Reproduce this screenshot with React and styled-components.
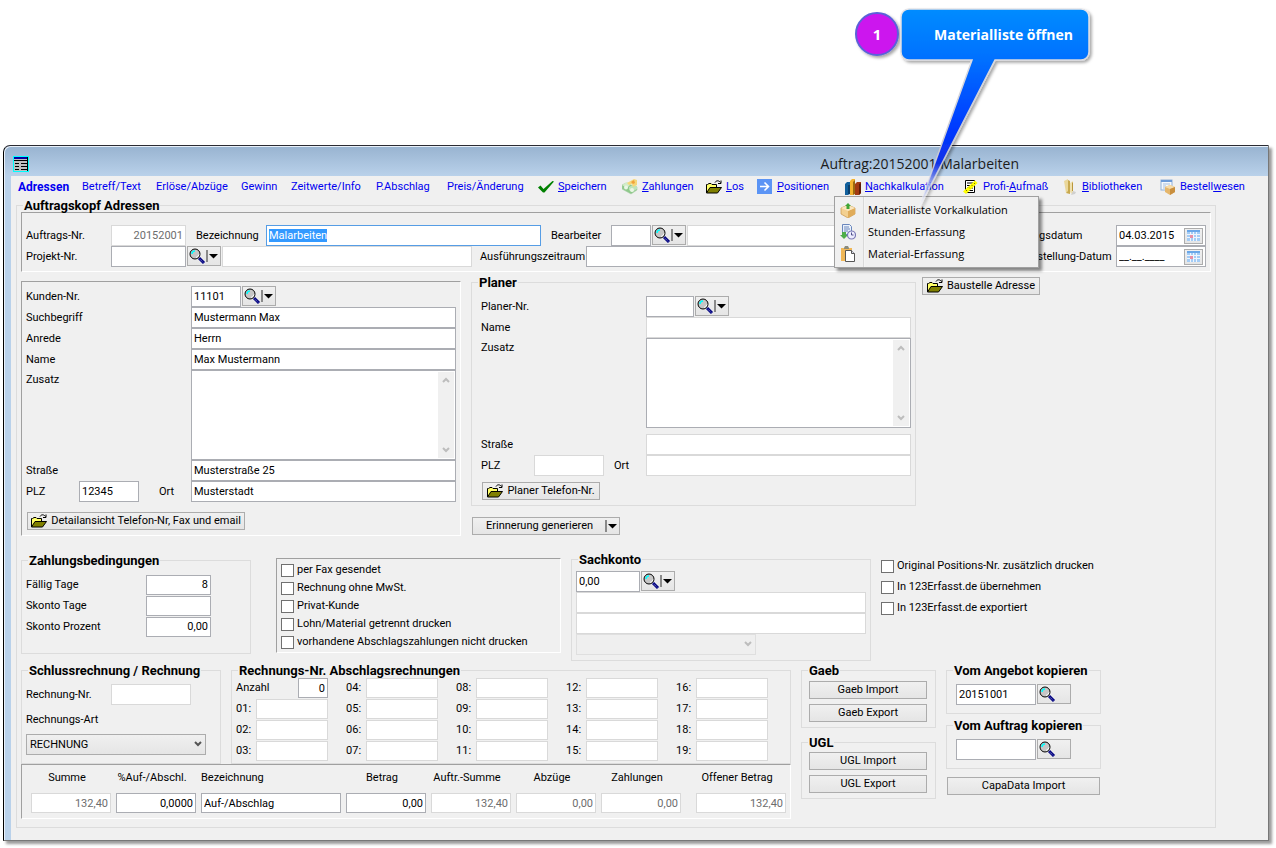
import React, { useEffect, useRef } from "react";
import styled, { createGlobalStyle } from "styled-components";

const UI_FONT = 'Roboto, "Liberation Sans", sans-serif';

const GlobalStyle = createGlobalStyle`
  *, *::before, *::after { box-sizing: border-box; }
  body { margin: 0; background: #fff; color: #000; font: 11px/16px ${UI_FONT}; }
  input, select, button, textarea { font: inherit; color: inherit; }
  svg { flex: none; }
`;

/* ---------- window frame ---------- */

const Page = styled.main`
  position: relative;
  min-width: 1240px;
  padding: 145px 7px 6px 3px;
`;

const Window = styled.section`
  border: 1px solid #000;
  border-top-color: #2b2b33;
  border-right-color: #777;
  border-bottom-color: #777;
  border-top-left-radius: 7px;
  background: #b9d1ea;
  box-shadow: inset 1px 1px 0 #e9f1fa, 3px 3px 3px rgba(0, 0, 0, 0.4);
`;

const TitleBar = styled.header`
  display: flex;
  align-items: center;
  height: 29px;
  margin: 1px 0 0 1px;
  padding: 5px 8px 0;
  border-top-left-radius: 6px;
  background: linear-gradient(#99b4d1, #b9d1ea);
`;

const Title = styled.h1`
  flex: 1;
  margin: 0;
  padding: 0 241px 0 8px;
  text-align: right;
  font: 400 14px/20px "Open Sans", "Noto Sans", sans-serif;
  color: #1c1c1c;
`;

const Client = styled.div`
  margin-left: 7px;
  padding: 0 52px 12px 5px;
  background: #f0f0f0;
`;

/* ---------- tool bar ---------- */

const ToolBar = styled.nav`
  display: grid;
  grid-template-columns: 64px 74px 85px 50px 85px 71px 91px 84px 84px 51px 88px 118px 99px 98px 84px;
  height: 23px;
  padding-left: 2px;
`;

const ToolItem = styled.div`
  position: relative;
  display: flex;
`;

const ToolButton = styled.button`
  display: flex;
  align-items: center;
  gap: 4px;
  padding: 0;
  height: 22px;
  border: 0;
  background: none;
  color: #0000f0;
  white-space: nowrap;
  font-size: ${(p) => (p.$active ? 12 : 11)}px;
  font-weight: ${(p) => (p.$active ? 700 : 400)};
`;

const Menu = styled.div`
  position: absolute;
  z-index: 2;
  top: 20px;
  left: -11px;
  width: 205px;
  padding: 2px;
  border: 1px solid #a0a0a0;
  background: linear-gradient(90deg, transparent 28px, #d9d9d9 28px, #d9d9d9 29px, #f8f8f8 29px, transparent 30px) #f0f0f0;
  box-shadow: 3px 3px 3px rgba(0, 0, 0, 0.45);
`;

const MenuItem = styled.button`
  display: flex;
  align-items: center;
  gap: 12px;
  width: 100%;
  height: 22px;
  padding: 0 3px;
  border: 0;
  background: none;
  white-space: nowrap;
  font: 11px/16px "Open Sans", "Noto Sans", sans-serif;
`;

/* ---------- containers ---------- */

const Group = styled.fieldset`
  min-width: 0;
  margin: ${(p) => p.$mt || 0}px 0 0;
  padding: 0;
  width: ${(p) => (p.$w ? p.$w + "px" : "auto")};
  flex: none;
  border: 1px solid #dcdcdc;
`;

const Legend = styled.legend`
  margin-left: 6px;
  padding: 0 1px;
  height: 13px;
  font-size: 13px;
  font-weight: 700;
  line-height: 13px;
`;

const GroupBody = styled.div`
  padding: ${(p) => p.$pad || "0 4px"};
`;

const Sunken = styled.div`
  flex: none;
  width: ${(p) => (p.$w ? p.$w + "px" : "auto")};
  margin-top: ${(p) => p.$mt || 0}px;
  padding: ${(p) => p.$pad || "4px"};
  border: 1px solid #fff;
  border-top-color: #a0a0a0;
  border-left-color: #a0a0a0;
`;

const Columns = styled.div`
  display: flex;
  align-items: flex-start;
  gap: ${(p) => p.$gap || 0}px;
  padding-top: ${(p) => p.$pt || 0}px;
`;

const Stack = styled.div`
  display: flex;
  flex-direction: column;
  align-items: flex-start;
  gap: ${(p) => p.$gap || 0}px;
  margin: ${(p) => p.$m || 0};
`;

const Row = styled.div`
  display: flex;
  align-items: ${(p) => (p.$top ? "flex-start" : "center")};
  height: ${(p) => (p.$tall ? 90 : 21)}px;
  margin-top: ${(p) => p.$mt || 0}px;
`;

/* ---------- controls ---------- */

const Label = styled.label`
  flex: none;
  width: ${(p) => (p.$w ? p.$w + "px" : "auto")};
  margin-left: ${(p) => p.$ml || 0}px;
  line-height: 20px;
  white-space: nowrap;
`;

const Input = styled.input`
  flex: ${(p) => (p.$w ? "none" : "1")};
  min-width: 0;
  width: ${(p) => (p.$w ? p.$w + "px" : "auto")};
  height: ${(p) => p.$h || 21}px;
  margin: 0;
  padding: 0 2px;
  border: 1px solid ${(p) => (p.$focus ? "#569de5" : p.disabled ? "#d9d9d9" : "#abadb3")};
  border-radius: 0;
  outline: 0;
  background: #fff;
  color: ${(p) => (p.disabled ? "#6d6d6d" : "#000")};
  text-align: ${(p) => (p.$right ? "right" : "left")};
  &::selection { background: #3399ff; color: #fff; }
`;

const SumInput = styled(Input)`
  flex: none;
  width: 100%;
  height: 20px;
`;

const Button = styled.button`
  display: flex;
  align-items: center;
  justify-content: center;
  gap: 4px;
  flex: none;
  width: ${(p) => p.$w}px;
  height: 18px;
  margin: ${(p) => p.$m || 0};
  padding: 0;
  border: 1px solid #acacac;
  background: linear-gradient(#f0f0f0, #e5e5e5);
  white-space: nowrap;
`;

const LookupButton = styled(Button)`
  height: 20px;
  align-self: flex-start;
  justify-content: flex-start;
  gap: 0;
  width: 34px;
  margin: 0 1px;
`;

const SplitButton = styled(Button)`
  justify-content: space-between;
  padding: 0 1px 0 13px;
`;

const Memo = styled.div`
  display: flex;
  width: 265px;
  height: 90px;
  padding: 1px;
  border: 1px solid #abadb3;
  background: #fff;
`;

const MemoText = styled.textarea`
  flex: 1;
  min-width: 0;
  padding: 1px;
  border: 0;
  outline: 0;
  resize: none;
  overflow: hidden;
  background: #fff;
`;

const Rail = styled.div`
  display: flex;
  flex-direction: column;
  justify-content: space-between;
  align-items: center;
  width: 16px;
  padding: 5px 0;
  background: #f0f0f0;
`;

const SelectBox = styled.span`
  position: relative;
  display: block;
  width: 180px;
  height: 21px;
  & > svg { position: absolute; right: 4px; top: 7px; pointer-events: none; }
`;

const Select = styled.select`
  appearance: none;
  width: 100%;
  height: 21px;
  padding: 0 3px;
  border: 1px solid ${(p) => (p.disabled ? "#d9d9d9" : "#acacac")};
  border-radius: 0;
  background: ${(p) => (p.disabled ? "#efefef" : "linear-gradient(#f0f0f0, #e5e5e5)")};
`;

const Check = styled.label`
  display: flex;
  align-items: center;
  gap: 3px;
  height: 18px;
  white-space: nowrap;
`;

const Tick = styled.input`
  appearance: none;
  flex: none;
  width: 13px;
  height: 13px;
  margin: 0;
  border: 1px solid #707070;
  background: #fff;
`;

const DateBox = styled.div`
  display: flex;
  align-items: center;
  width: 90px;
  height: 21px;
  padding-right: 2px;
  border: 1px solid #abadb3;
  background: #fff;
`;

const DateInput = styled(Input)`
  border: 0;
  height: 19px;
`;

const CalendarButton = styled(Button)`
  height: 16px;
`;

const NumberGrid = styled.div`
  display: grid;
  grid-template-rows: repeat(4, 21px);
  grid-auto-flow: column;
  grid-auto-columns: 92px;
  column-gap: 18px;
`;

const NumberCell = styled.div`
  display: flex;
  justify-content: space-between;
`;

const SumGrid = styled.div`
  display: grid;
  grid-template-columns: 80px 80px 140px 80px 80px 80px 80px 100px;
  column-gap: 5px;
`;

const SumCell = styled.div`
  display: flex;
  flex-direction: column;
  gap: 5px;
  padding-left: ${(p) => (p.$last ? 10 : 0)}px;
`;

const SumLabel = styled.label`
  padding-right: ${(p) => (p.$start ? 0 : 8)}px;
  text-align: ${(p) => (p.$start ? "left" : "center")};
  line-height: 20px;
  white-space: nowrap;
`;

/* ---------- annotation ---------- */

const Callout = styled.aside`
  position: absolute;
  z-index: 5;
  top: 0;
  left: 850px;
  width: 250px;
  height: 220px;
  pointer-events: none;
  color: #fff;
  font: 700 14px/18px "Open Sans", "Noto Sans", sans-serif;
  & > svg { position: absolute; inset: 0; }
`;

const CalloutText = styled.div`
  position: absolute;
  top: 10px;
  left: 51px;
  width: 188px;
  padding: 16px 16px 0 0;
  text-align: right;
  white-space: nowrap;
`;

const CalloutNumber = styled.div`
  position: absolute;
  top: 25px;
  left: 6px;
  width: 42px;
  text-align: center;
  font-size: 15px;
`;

/* ---------- icons ---------- */

const Glass = () => (
  <svg width="18" height="18" viewBox="0 0 18 18">
    <circle cx="7" cy="7" r="5" fill="#c6c6c6" stroke="#000" strokeWidth="1" />
    <path d="M4 7a3 3 0 0 1 3-3" stroke="#0ff" strokeWidth="1.5" fill="none" />
    <path d="M8 10.5a4 4 0 0 0 3-3" stroke="#fff" fill="none" />
    <path d="M11 11l5 5" stroke="#000080" strokeWidth="3" />
    <path d="M11.5 11.8l4 4" stroke="#dfe4ff" strokeWidth=".7" strokeDasharray="1 1" />
  </svg>
);

const SplitArrow = () => (
  <svg width="13" height="14" viewBox="0 0 13 14">
    <path d="M1 1v12" stroke="#8a8a8a" strokeWidth="2" />
    <path d="M3 5h9L7.500 9.500z" fill="#000" />
  </svg>
);

const Chevron = ({ up, color = "#555" }) => (
  <svg width="8" height="6" viewBox="0 0 8 6">
    <path d={up ? "M1 5l3-3 3 3" : "M1 1l3 3 3-3"} fill="none" stroke={color} strokeWidth="2" />
  </svg>
);

const Folder = () => (
  <svg width="16" height="14" viewBox="0 0 16 14">
    <path d="M.5 13V4.500h1L3 3.500h2l1 1h4.500V7" fill="#ffff66" stroke="#000" />
    <path d="M.5 13L4 7.500h11.500L11.500 13z" fill="#808000" stroke="#000" />
    <path d="M9 2.500c1.500-2.500 4-2 5.500 0M15 .500v3h-3" fill="none" stroke="#000" />
  </svg>
);

const CheckMark = () => (
  <svg width="16" height="14" viewBox="0 0 16 14">
    <path d="M0 7.500l2.500-2 3 3.500L14.500 1l1.500.500L6.500 12.500H5z" fill="#008000" />
  </svg>
);

const Money = () => (
  <svg width="16" height="16" viewBox="0 0 16 16">
    <path d="M0 6l4-2 8 3 3 1v3l-6 4-9-5z" fill="#8fc98b" stroke="#a9cfa8" strokeWidth=".6" />
    <path d="M0 6l5-3 4 2-4 4z" fill="#d2ecc8" />
    <path d="M7 8l4-2 4 1v3l-5 3-3-2z" fill="#bfe3bb" />
    <circle cx="4" cy="8.500" r="2" fill="#eaf6e6" />
    <circle cx="10" cy="11" r="2" fill="#eaf6e6" />
    <path d="M5 4l7-4 3 1v5l-4 2-1-3-3 1z" fill="#f5d77a" />
    <path d="M9 3l3-2 1 3-2 1z" fill="#f0a23c" />
  </svg>
);

const ArrowTile = () => (
  <svg width="16" height="16" viewBox="0 0 16 16">
    <rect width="15" height="15" fill="#5b94f5" />
    <path d="M3 7.500h8M7.500 3.500l4 4-4 4" fill="none" stroke="#fff" strokeWidth="1.600" />
  </svg>
);

const Books = () => (
  <svg width="16" height="17" viewBox="0 0 16 17">
    <path d="M0 5l2-2h3v12l-2 1H0z" fill="#12609c" />
    <path d="M3 6h2v9H3z" fill="#0b3f6c" />
    <path d="M5 2l2-2h3v14l-2 2H5z" fill="#f3b32f" />
    <path d="M8 3l2-2v14l-2 1z" fill="#9a6a10" />
    <path d="M10 5l2-2h4v11l-2 2h-4z" fill="#a23a13" />
    <path d="M14 5l2-1v10l-2 2z" fill="#5e1c08" />
  </svg>
);

const RulerSheet = () => (
  <svg width="16" height="16" viewBox="0 0 16 16">
    <path d="M2.500 1.500h9v12h-9z" fill="#fff" stroke="#000" />
    <path d="M4 4h6M4 6.500h6M4 9h6M6 11.500h4" stroke="#000" />
    <path d="M0 12.500L12 1.500 14.500 4 3 15z" fill="#ffff00" />
    <path d="M3 11l1 1M6 8.500l1 1M8.500 6l1 1M11 4l1 1" stroke="#777700" />
  </svg>
);

const Binders = () => (
  <svg width="16" height="16" viewBox="0 0 16 16">
    <path d="M2 2l4-2v13l-2 1z" fill="#ead79a" />
    <path d="M6 1l2 1v13l-4-1 2-2z" fill="#c8a94f" />
    <path d="M8 4l3-2v10l2 2-3 1-2-2z" fill="#efe0ad" />
    <path d="M10 4l1-1v9h-1z" fill="#b9963c" />
    <path d="M11 12l3 1-1 2-4 1z" fill="#d0d0d0" />
  </svg>
);

const OrderBox = () => (
  <svg width="16" height="16" viewBox="0 0 16 16">
    <rect x="1" y="1" width="11" height="10" fill="#f4f8fd" stroke="#8fb0d8" />
    <path d="M1 2h11" stroke="#6d9bd8" strokeWidth="2" />
    <path d="M3 5h7M3 7h3M3 9h2" stroke="#a9bfdc" />
    <path d="M5 8l5-2 5 2v5l-5 3-5-3z" fill="#e5b66b" />
    <path d="M5 8l5-2 5 2-5 2z" fill="#f7dcaa" />
    <path d="M10 10l5-2v5l-5 3z" fill="#c98f3e" />
  </svg>
);

const PackageUp = () => (
  <svg width="16" height="16" viewBox="0 0 16 16">
    <path d="M1 6l7-3 7 3v6l-7 4-7-4z" fill="#f3d090" stroke="#c9974a" strokeWidth=".7" />
    <path d="M8 9l7-3v6l-7 4z" fill="#e0ac5a" />
    <path d="M1 6l7 3 7-3-7-3z" fill="#fae6bd" />
    <path d="M8 1l3 3H9.500v3h-3V4H5z" fill="#3fa535" />
  </svg>
);

const SheetClock = () => (
  <svg width="16" height="16" viewBox="0 0 16 16">
    <path d="M2.500.500h7l2 2v8h-9z" fill="#eaf1fb" stroke="#6a87bd" />
    <path d="M4 3h5M4 5h6M4 7h4" stroke="#6a87bd" />
    <path d="M2 8h4v3h2l-4 4-4-4h2z" fill="#4fae4a" />
    <circle cx="11.500" cy="11" r="4" fill="#eeeeff" stroke="#7a78b5" strokeWidth="1.200" />
    <path d="M11.500 8.500V11h2" stroke="#50508c" fill="none" />
  </svg>
);

const Clipboard = () => (
  <svg width="16" height="16" viewBox="0 0 16 16">
    <path d="M1 2h11v13H1z" fill="#f0b757" />
    <path d="M4 2l1-2h3l1 2v1H4z" fill="#8b8b7a" />
    <path d="M5.500 4.500h6l3 3v8h-9z" fill="#fff" stroke="#555" />
    <path d="M11.500 4.500v3h3" fill="#dde" stroke="#555" />
  </svg>
);

const Calendar = () => (
  <svg width="13" height="11" viewBox="0 0 13 11">
    <rect width="13" height="11" fill="#a4ccf5" />
    <path d="M0 1h13" stroke="#6aa7e8" strokeWidth="2" />
    <path d="M0 4.500h13M0 7.500h13M3.500 2v9M6.500 2v9M9.500 2v9" stroke="#eef5fd" />
    <rect x="3" y="5" width="3" height="3" fill="#e78fa5" />
  </svg>
);

const WindowIcon = () => (
  <svg width="16" height="16" viewBox="0 0 16 16" shapeRendering="crispEdges">
    <rect width="16" height="16" fill="#0ff" />
    <rect x="1" y="1" width="14" height="14" fill="#c0c0c0" />
    <rect x="1" y="1" width="14" height="2" fill="#0000a0" />
    <path d="M1 4.500h13M2 7.500h4M8 7.500h6M2 10.500h4M8 10.500h6M2 13.500h4M8 13.500h6M14.500 1v14" stroke="#000" />
  </svg>
);

const CalloutShape = () => (
  <svg width="250" height="220" viewBox="0 0 250 220">
    <defs>
      <linearGradient id="bubbleFill" gradientUnits="userSpaceOnUse" x1="0" y1="9" x2="0" y2="212">
        <stop offset="0" stopColor="#008cff" />
        <stop offset=".25" stopColor="#0070ff" />
        <stop offset=".6" stopColor="#0038ff" />
        <stop offset=".76" stopColor="#1030e8" />
        <stop offset=".87" stopColor="#8fa0ee" stopOpacity=".7" />
        <stop offset="1" stopColor="#fff" stopOpacity=".3" />
      </linearGradient>
      <linearGradient id="bubbleEdge" gradientUnits="userSpaceOnUse" x1="0" y1="9" x2="0" y2="212">
        <stop offset="0" stopColor="#e4e4e8" />
        <stop offset=".7" stopColor="#c9c9d2" />
        <stop offset="1" stopColor="#fff" stopOpacity=".4" />
      </linearGradient>
      <filter id="shade" x="-10%" y="-10%" width="125%" height="125%">
        <feDropShadow dx="2" dy="2" stdDeviation="1.500" floodColor="#000" floodOpacity=".35" />
      </filter>
    </defs>
    <g filter="url(#shade)">
      <circle cx="27" cy="34" r="21" fill="#cc14ee" stroke="#5a62d8" strokeWidth="2" />
      <path
        d="M59 9H231a8 8 0 0 1 8 8V52a8 8 0 0 1-8 8H145L68 210 122 60H59a8 8 0 0 1-8-8V17a8 8 0 0 1 8-8z"
        fill="url(#bubbleFill)"
        stroke="url(#bubbleEdge)"
        strokeWidth="1.500"
      />
    </g>
  </svg>
);

/* ---------- composed parts ---------- */

const Lookup = ({ label, plain }) => (
  <LookupButton type="button" aria-label={label}>
    <Glass />
    {!plain && <SplitArrow />}
  </LookupButton>
);

const MemoField = ({ id }) => (
  <Memo>
    <MemoText id={id} />
    <Rail>
      <Chevron up color="#bdbdbd" />
      <Chevron color="#bdbdbd" />
    </Rail>
  </Memo>
);

const DateField = ({ id, value }) => (
  <DateBox>
    <DateInput id={id} defaultValue={value} />
    <CalendarButton type="button" aria-label="Kalender" $w={19}>
      <Calendar />
    </CalendarButton>
  </DateBox>
);

const CheckField = ({ children }) => (
  <Check>
    <Tick type="checkbox" />
    {children}
  </Check>
);

/* Underlines the letter that follows "&" in a menu caption. */
const Caption = ({ text }) => {
  const at = text.indexOf("&");
  if (at < 0) return <span>{text}</span>;
  return (
    <span>
      {text.slice(0, at)}
      <u>{text[at + 1]}</u>
      {text.slice(at + 2)}
    </span>
  );
};

const TOOLS = [
  { text: "Adressen", active: true },
  { text: "Betreff/Text" },
  { text: "Erlöse/Abzüge" },
  { text: "Gewinn" },
  { text: "Zeitwerte/Info" },
  { text: "P.Abschlag" },
  { text: "Preis/Änderung" },
  { text: "&Speichern", Icon: CheckMark },
  { text: "&Zahlungen", Icon: Money },
  { text: "&Los", Icon: Folder },
  { text: "&Positionen", Icon: ArrowTile },
  { text: "&Nachkalkulation", Icon: Books, menu: true },
  { text: "Profi-&Aufmaß", Icon: RulerSheet },
  { text: "&Bibliotheken", Icon: Binders },
  { text: "Bestell&wesen", Icon: OrderBox },
];

const MENU = [
  { text: "Materialliste Vorkalkulation", Icon: PackageUp },
  { text: "Stunden-Erfassung", Icon: SheetClock },
  { text: "Material-Erfassung", Icon: Clipboard },
];

const NUMBERS = Array.from({ length: 19 }, (_, i) => String(i + 1).padStart(2, "0"));

const SUMS = [
  { id: "summe", label: "Summe", value: "132,40", off: true },
  { id: "prozent", label: "%Auf-/Abschl.", value: "0,0000" },
  { id: "abschlag", label: "Bezeichnung", value: "Auf-/Abschlag", text: true },
  { id: "betrag", label: "Betrag", value: "0,00" },
  { id: "auftr", label: "Auftr.-Summe", value: "132,40", off: true },
  { id: "abzuege", label: "Abzüge", value: "0,00", off: true },
  { id: "zahlungen", label: "Zahlungen", value: "0,00", off: true },
  { id: "offen", label: "Offener Betrag", value: "132,40", off: true, last: true },
];

const HeaderPanel = () => {
  const field = useRef(null);
  useEffect(() => {
    field.current.focus();
    field.current.select();
  }, []);
  return (
    <Sunken $pad="12px 4px 4px">
      <Row>
        <Label htmlFor="auftrag" $w={85}>Auftrags-Nr.</Label>
        <Input id="auftrag" $w={75} $right disabled defaultValue="20152001" />
        <Label htmlFor="bez" $w={70} $ml={10}>Bezeichnung</Label>
        <Input id="bez" ref={field} $w={275} $focus defaultValue="Malarbeiten" />
        <Label htmlFor="bearb" $w={60} $ml={10}>Bearbeiter</Label>
        <Input id="bearb" $w={40} />
        <Lookup label="Bearbeiter suchen" />
        <Input aria-label="Name des Bearbeiters" disabled />
        <Label htmlFor="datum" $w={107} $ml={9}>Auftragsdatum</Label>
        <DateField id="datum" value="04.03.2015" />
      </Row>
      <Row>
        <Label htmlFor="projekt" $w={85}>Projekt-Nr.</Label>
        <Input id="projekt" $w={75} />
        <Lookup label="Projekt suchen" />
        <Input aria-label="Projektname" $w={250} disabled />
        <Label htmlFor="zeitraum" $w={106} $ml={8}>Ausführungszeitraum</Label>
        <Input id="zeitraum" />
        <Label htmlFor="fertig" $w={107} $ml={9}>Fertigstellung-Datum</Label>
        <DateField id="fertig" value="__.__.____" />
      </Row>
    </Sunken>
  );
};

const CustomerPanel = () => (
  <Sunken $w={440} $mt={5} $pad="4px 4px 5px">
    <Row>
      <Label htmlFor="kunde" $w={165}>Kunden-Nr.</Label>
      <Input id="kunde" $w={50} defaultValue="11101" />
      <Lookup label="Kunde suchen" />
    </Row>
    <Row>
      <Label htmlFor="such" $w={165}>Suchbegriff</Label>
      <Input id="such" $w={265} defaultValue="Mustermann Max" />
    </Row>
    <Row>
      <Label htmlFor="anrede" $w={165}>Anrede</Label>
      <Input id="anrede" $w={265} defaultValue="Herrn" />
    </Row>
    <Row>
      <Label htmlFor="name" $w={165}>Name</Label>
      <Input id="name" $w={265} defaultValue="Max Mustermann" />
    </Row>
    <Row $tall $top>
      <Label htmlFor="zusatz" $w={165}>Zusatz</Label>
      <MemoField id="zusatz" />
    </Row>
    <Row>
      <Label htmlFor="strasse" $w={165}>Straße</Label>
      <Input id="strasse" $w={265} defaultValue="Musterstraße 25" />
    </Row>
    <Row>
      <Label htmlFor="plz" $w={53}>PLZ</Label>
      <Input id="plz" $w={60} defaultValue="12345" />
      <Label htmlFor="ort" $w={32} $ml={20}>Ort</Label>
      <Input id="ort" $w={265} defaultValue="Musterstadt" />
    </Row>
    <Button type="button" $w={218} $m="10px 0 0 1px">
      <Folder />
      Detailansicht Telefon-Nr, Fax und email
    </Button>
  </Sunken>
);

const PlanerGroup = () => (
  <Group $w={445}>
    <Legend>Planer</Legend>
    <GroupBody $pad="7px 4px 5px 9px">
      <Row>
        <Label htmlFor="planer" $w={165}>Planer-Nr.</Label>
        <Input id="planer" $w={48} />
        <Lookup label="Planer suchen" />
      </Row>
      <Row>
        <Label htmlFor="pname" $w={165}>Name</Label>
        <Input id="pname" $w={265} disabled />
      </Row>
      <Row $tall $top>
        <Label htmlFor="pzusatz" $w={165}>Zusatz</Label>
        <MemoField id="pzusatz" />
      </Row>
      <Row $mt={6}>
        <Label htmlFor="pstrasse" $w={165}>Straße</Label>
        <Input id="pstrasse" $w={265} disabled />
      </Row>
      <Row>
        <Label htmlFor="pplz" $w={53}>PLZ</Label>
        <Input id="pplz" $w={70} disabled />
        <Label htmlFor="port" $w={32} $ml={10}>Ort</Label>
        <Input id="port" $w={265} disabled />
      </Row>
      <Button type="button" $w={118} $m="6px 0 0 1px">
        <Folder />
        Planer Telefon-Nr.
      </Button>
    </GroupBody>
  </Group>
);

const PaymentRow = () => (
  <Columns $pt={17}>
    <Group $w={230} $mt={1}>
      <Legend>Zahlungsbedingungen</Legend>
      <GroupBody $pad="7px 4px 16px">
        <Row>
          <Label htmlFor="faellig" $w={120}>Fällig Tage</Label>
          <Input id="faellig" $w={65} $h={20} $right defaultValue="8" />
        </Row>
        <Row>
          <Label htmlFor="sktage" $w={120}>Skonto Tage</Label>
          <Input id="sktage" $w={65} $h={20} $right />
        </Row>
        <Row>
          <Label htmlFor="skproz" $w={120}>Skonto Prozent</Label>
          <Input id="skproz" $w={65} $h={20} $right defaultValue="0,00" />
        </Row>
      </GroupBody>
    </Group>
    <Stack $m="0 10px 0 25px">
      <Sunken $w={285} $mt={5} $pad="2px 4px 1px">
        <CheckField>per Fax gesendet</CheckField>
        <CheckField>Rechnung ohne MwSt.</CheckField>
        <CheckField>Privat-Kunde</CheckField>
        <CheckField>Lohn/Material getrennt drucken</CheckField>
        <CheckField>vorhandene Abschlagszahlungen nicht drucken</CheckField>
      </Sunken>
    </Stack>
    <Group $w={300}>
      <Legend>Sachkonto</Legend>
      <GroupBody $pad="5px 4px">
        <Row>
          <Input aria-label="Sachkonto" $w={64} defaultValue="0,00" />
          <Lookup label="Sachkonto suchen" />
        </Row>
        <Row>
          <Input aria-label="Kontobezeichnung" $w={290} disabled />
        </Row>
        <Row>
          <Input aria-label="Kontozusatz" $w={290} disabled />
        </Row>
        <SelectBox>
          <Select aria-label="Kontoart" disabled />
          <Chevron color="#bdbdbd" />
        </SelectBox>
      </GroupBody>
    </Group>
    <Stack $gap={3} $m="4px 0 0 10px">
      <CheckField>Original Positions-Nr. zusätzlich drucken</CheckField>
      <CheckField>In 123Erfasst.de übernehmen</CheckField>
      <CheckField>In 123Erfasst.de exportiert</CheckField>
    </Stack>
  </Columns>
);

const InvoiceArea = () => (
  <div>
    <Columns $gap={10}>
      <Group $w={200}>
        <Legend>Schlussrechnung / Rechnung</Legend>
        <GroupBody $pad="7px 4px 8px">
          <Row>
            <Label htmlFor="rechnr" $w={85}>Rechnung-Nr.</Label>
            <Input id="rechnr" $w={80} disabled />
          </Row>
          <Row $mt={4}>
            <Label htmlFor="rechart">Rechnungs-Art</Label>
          </Row>
          <Row $mt={4}>
            <SelectBox>
              <Select id="rechart">
                <option>RECHNUNG</option>
              </Select>
              <Chevron />
            </SelectBox>
          </Row>
        </GroupBody>
      </Group>
      <Group $w={560}>
        <Legend>Rechnungs-Nr. Abschlagsrechnungen</Legend>
        <GroupBody $pad="1px 4px">
          <NumberGrid>
            <NumberCell>
              <Label htmlFor="anzahl">Anzahl</Label>
              <Input id="anzahl" $w={30} $h={20} $right defaultValue="0" />
            </NumberCell>
            {NUMBERS.map((n) => (
              <NumberCell key={n}>
                <Label htmlFor={"nr" + n}>{n}:</Label>
                <Input id={"nr" + n} $w={72} $h={20} disabled />
              </NumberCell>
            ))}
          </NumberGrid>
        </GroupBody>
      </Group>
    </Columns>
    <Sunken $pad="3px 4px 5px 9px">
      <SumGrid>
        {SUMS.map((s) => (
          <SumCell key={s.id} $last={s.last}>
            <SumLabel htmlFor={s.id} $start={s.text}>{s.label}</SumLabel>
            <SumInput id={s.id} disabled={s.off} $right={!s.text} defaultValue={s.value} />
          </SumCell>
        ))}
      </SumGrid>
    </Sunken>
  </div>
);

const TransferGroup = ({ name, pad }) => (
  <Group $w={135}>
    <Legend>{name}</Legend>
    <GroupBody $pad={pad}>
      <Stack $gap={5}>
        <Button type="button" $w={118}>{name} Import</Button>
        <Button type="button" $w={118}>{name} Export</Button>
      </Stack>
    </GroupBody>
  </Group>
);

const CopyGroup = ({ title, field, value }) => (
  <Group $w={155}>
    <Legend>{title}</Legend>
    <GroupBody $pad="7px 9px 8px">
      <Row>
        <Input aria-label={field} $w={80} defaultValue={value} />
        <Lookup plain label={field + " suchen"} />
      </Row>
    </GroupBody>
  </Group>
);

export default function App() {
  return (
    <Page>
      <GlobalStyle />
      <Window>
        <TitleBar>
          <WindowIcon />
          <Title>Auftrag:20152001 Malarbeiten</Title>
        </TitleBar>
        <Client>
          <ToolBar>
            {TOOLS.map(({ text, Icon, active, menu }) => (
              <ToolItem key={text}>
                <ToolButton type="button" $active={active}>
                  {Icon && <Icon />}
                  <Caption text={text} />
                </ToolButton>
                {menu && (
                  <Menu role="menu">
                    {MENU.map((m) => (
                      <MenuItem key={m.text} type="button" role="menuitem">
                        <m.Icon />
                        {m.text}
                      </MenuItem>
                    ))}
                  </Menu>
                )}
              </ToolItem>
            ))}
          </ToolBar>
          <Group>
            <Legend>Auftragskopf Adressen</Legend>
            <GroupBody $pad="0 4px 8px">
              <HeaderPanel />
              <Columns $pt={4}>
                <CustomerPanel />
                <Stack $gap={11} $m="0 6px 0 10px">
                  <PlanerGroup />
                  <SplitButton type="button" $w={148} $m="0 0 0 1px">
                    Erinnerung generieren
                    <SplitArrow />
                  </SplitButton>
                </Stack>
                <Button type="button" $w={118} $m="1px 0 0">
                  <Folder />
                  Baustelle Adresse
                </Button>
              </Columns>
              <PaymentRow />
              <Columns $pt={3} $gap={10}>
                <InvoiceArea />
                <Stack $gap={8}>
                  <TransferGroup name="Gaeb" pad="4px 7px 5px" />
                  <TransferGroup name="UGL" pad="3px 7px 5px" />
                </Stack>
                <Stack $gap={5}>
                  <CopyGroup title="Vom Angebot kopieren" field="Angebot" value="20151001" />
                  <CopyGroup title="Vom Auftrag kopieren" field="Auftrag" />
                  <Button type="button" $w={153} $m="3px 0 0 1px">CapaData Import</Button>
                </Stack>
              </Columns>
            </GroupBody>
          </Group>
        </Client>
      </Window>
      <Callout>
        <CalloutShape />
        <CalloutNumber>1</CalloutNumber>
        <CalloutText>Materialliste öffnen</CalloutText>
      </Callout>
    </Page>
  );
}
